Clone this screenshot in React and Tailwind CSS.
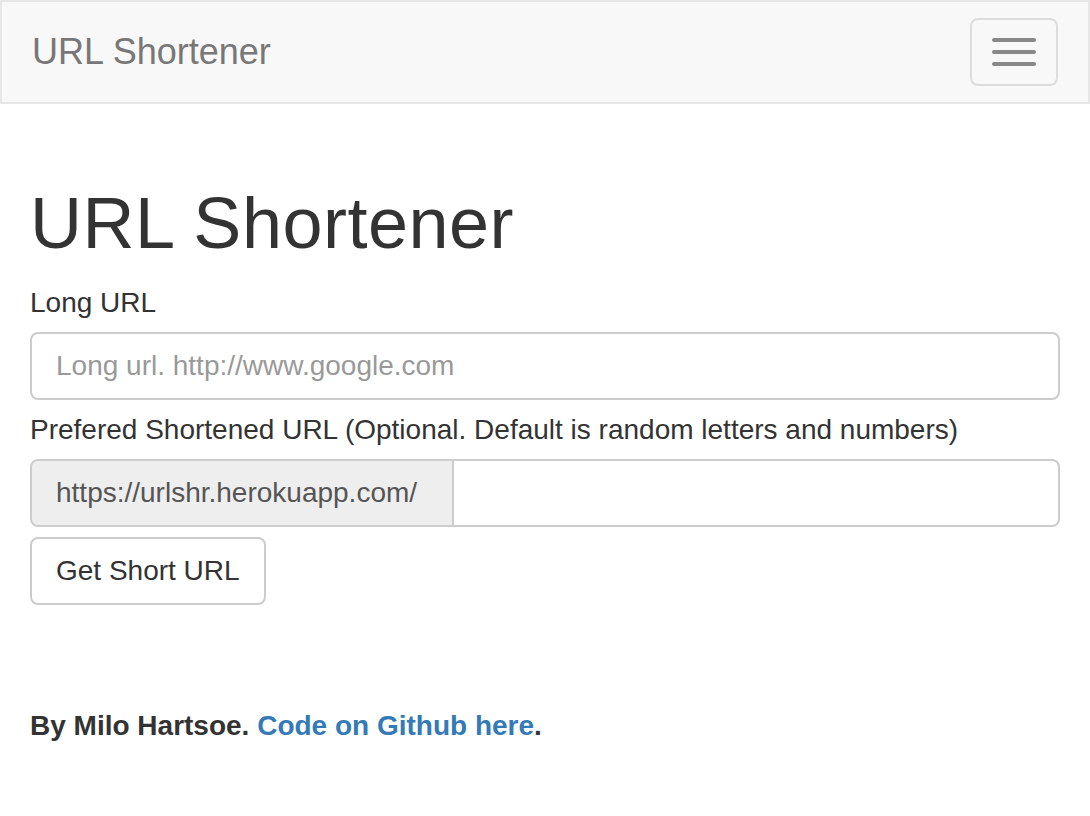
import React from "react";

const App = () => {
  return (
    <div className="min-h-screen bg-white text-[#333] font-['Liberation_Sans',Arial,sans-serif]">
      <nav className="flex items-center justify-between h-[104px] bg-[#f8f8f8] border-2 border-[#e7e7e7] px-[30px]">
        <span className="text-[36px] leading-[40px] text-[#777]">URL Shortener</span>
        <button className="flex flex-col items-center justify-center gap-[8px] w-[88px] h-[68px] rounded-[8px] border-2 border-[#ddd]">
          <span className="block w-[44px] h-[4px] rounded-[2px] bg-[#888]"></span>
          <span className="block w-[44px] h-[4px] rounded-[2px] bg-[#888]"></span>
          <span className="block w-[44px] h-[4px] rounded-[2px] bg-[#888]"></span>
        </button>
      </nav>

      <div className="px-[30px]">
        <h1 className="mt-[80px] mb-[20px] text-[72px] leading-[79px] font-medium tracking-[0.5px]">URL Shortener</h1>

        <label className="block text-[28px] leading-[40px] mb-[9px]">Long URL</label>
        <input
          type="text"
          placeholder="Long url. http://www.google.com"
          className="block w-full h-[68px] px-[24px] text-[28px] border-2 border-[#ccc] rounded-[8px] placeholder:text-[#999] outline-none"
        />

        <label className="block mt-[10px] text-[28px] leading-[40px] mb-[9px]">
          Prefered Shortened URL (Optional. Default is random letters and numbers)
        </label>
        <div className="flex h-[68px]">
          <span className="flex items-center w-[424px] px-[24px] text-[28px] text-[#555] bg-[#eee] border-2 border-[#ccc] rounded-l-[8px]">
            https://urlshr.herokuapp.com/
          </span>
          <input
            type="text"
            className="flex-1 min-w-0 px-[24px] text-[28px] border-2 border-l-0 border-[#ccc] rounded-r-[8px] outline-none"
          />
        </div>

        <button className="mt-[10px] h-[68px] px-[24px] text-[28px] text-[#333] bg-white border-2 border-[#ccc] rounded-[8px]">
          Get Short URL
        </button>

        <p className="mt-[101px] text-[28px] leading-[40px] font-bold">
          By Milo Hartsoe. <a href="#" className="text-[#337ab7]">Code on Github here</a>.
        </p>
      </div>
    </div>
  );
};

export default App;
